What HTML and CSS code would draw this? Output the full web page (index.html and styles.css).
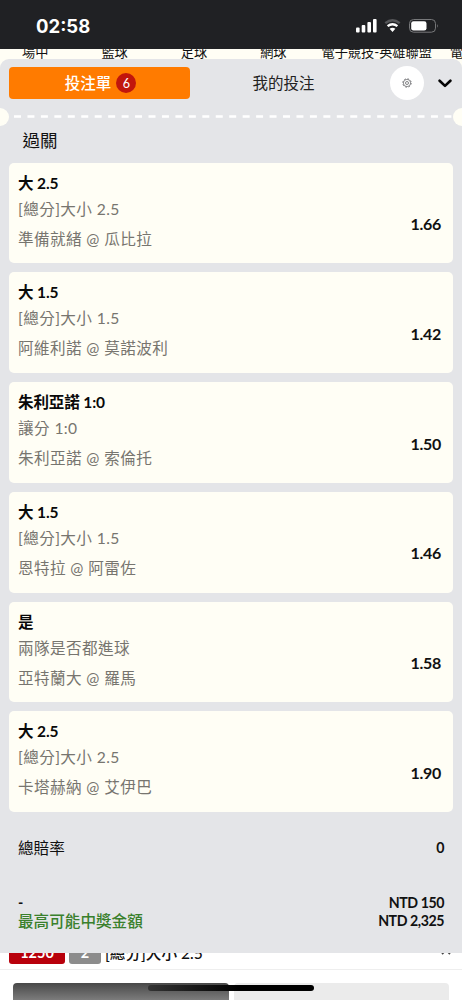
FILE: index.html
```html
<!DOCTYPE html>
<html lang="zh-Hant">
<head>
<meta charset="utf-8">
<meta name="viewport" content="width=device-width, initial-scale=1">
<title>投注單</title>
<link rel="stylesheet" href="styles.css">
</head>
<body>
<div class="screen">
  <header class="status">
    <span class="clock">02:58</span>
    <svg class="status-icons" width="86" height="18" viewBox="0 0 86 18">
      <g fill="#fff"><rect x="2" y="10.500" width="3.600" height="5" rx="1"/><rect x="7.700" y="8" width="3.600" height="7.500" rx="1"/><rect x="13.400" y="5" width="3.600" height="10.500" rx="1"/><rect x="19" y="2" width="3.600" height="13.500" rx="1"/></g>
      <path d="M31.300 6.200Q38.500 .2 45.700 6.200" fill="none" stroke="#56575a" stroke-width="2.400"/>
      <path d="M33.600 9.100Q38.500 5.200 43.400 9.100" fill="none" stroke="#fff" stroke-width="2.400"/>
      <path d="M35.600 11.800Q38.500 9.600 41.400 11.800L38.500 15Z" fill="#fff"/>
      <rect x="55.500" y="2.500" width="26" height="12.700" rx="4" fill="none" stroke="#77787a"/>
      <rect x="57.200" y="4.200" width="15.300" height="9.400" rx="2.300" fill="#fff"/>
      <path d="M83 7q1.700 1.900 0 3.800z" fill="#77787a"/>
    </svg>
  </header>
  <nav class="sports">
    <span>場中</span><span>籃球</span><span>足球</span><span>網球</span><span>電子競技-英雄聯盟</span><span>電子</span>
  </nav>
  <div class="sheet-back">
  <main class="sheet">
    <div class="tabs">
      <div class="tab active">投注單<span class="count">6</span></div>
      <div class="tab">我的投注</div>
      <div class="gear">
        <svg width="10" height="10" viewBox="0 0 10 10" fill="none" stroke="#66676a"><circle cx="5" cy="5" r="3.600" stroke-width=".7"/><circle cx="5" cy="5" r="4.200" stroke-width=".9" stroke-dasharray="1.650 1.650"/><circle cx="5" cy="5" r="1.500" stroke-width=".8"/></svg>
      </div>
      <svg class="chevron" width="14" height="9" viewBox="0 0 14 9" fill="none" stroke="#050505" stroke-width="2.600" stroke-linecap="round" stroke-linejoin="round"><path d="M1.600 1.700L7 6.900l5.400-5.200"/></svg>
    </div>
    <div class="perforation">
      <i class="notch"></i>
      <svg class="dashes" width="438" height="3"><path d="M0 1.500H438" stroke="#fff" stroke-width="2.600" stroke-dasharray="7 6.450"/></svg>
      <i class="notch right"></i>
    </div>
    <h1>過關</h1>
    <section class="bets">
      <article class="bet"><div><h2>大 2.5</h2><p>[總分]大小 2.5</p><p class="match">準備就緒 @ 瓜比拉</p></div><b class="odds">1.66</b></article>
      <article class="bet"><div><h2>大 1.5</h2><p>[總分]大小 1.5</p><p class="match">阿維利諾 @ 莫諾波利</p></div><b class="odds">1.42</b></article>
      <article class="bet"><div><h2>朱利亞諾 1:0</h2><p>讓分 1:0</p><p class="match">朱利亞諾 @ 索倫托</p></div><b class="odds">1.50</b></article>
      <article class="bet"><div><h2>大 1.5</h2><p>[總分]大小 1.5</p><p class="match">恩特拉 @ 阿雷佐</p></div><b class="odds">1.46</b></article>
      <article class="bet"><div><h2>是</h2><p>兩隊是否都進球</p><p class="match">亞特蘭大 @ 羅馬</p></div><b class="odds">1.58</b></article>
      <article class="bet"><div><h2>大 2.5</h2><p>[總分]大小 2.5</p><p class="match">卡塔赫納 @ 艾伊巴</p></div><b class="odds">1.90</b></article>
    </section>
    <section class="totals">
      <div class="row total-odds"><span>總賠率</span><b>0</b></div>
      <div class="row stake"><b>-</b><b>NTD 150</b></div>
      <div class="row win"><span>最高可能中獎金額</span><b>NTD 2,325</b></div>
    </section>
  </main>
  </div>
  <div class="underlay">
    <div class="market"><span class="tag red">1250</span><span class="tag gray">2</span><span class="market-name">[總分]大小 2.5</span>
      <svg class="up" width="10" height="6" viewBox="0 0 10 6" fill="none" stroke="#444" stroke-width="1.800"><path d="M1 5L5 1l4 4"/></svg>
    </div>
    <div class="tiles"><div class="tile dark"></div><div class="tile"></div></div>
    <div class="home-bar"></div>
  </div>
</div>
</body>
</html>
```
FILE: styles.css
```css
* { box-sizing: border-box; }
body, h1, h2, p { margin: 0; }
body {
  font-family: Lato, "Noto Sans CJK TC", sans-serif;
  color: #111;
  background: #fff;
}
.screen {
  position: relative;
  width: 462px;
  height: 1000px;
  overflow: hidden;
  display: flex;
  flex-direction: column;
}
.status {
  flex: 0 0 49px;
  background: #202124;
  display: flex;
  justify-content: space-between;
  align-items: center;
  padding: 2px 22px 0 36px;
}
.clock {
  font: 700 18.500px/20px Inter, sans-serif;
  color: #fff;
}
.sports {
  flex: 0 0 9.500px;
  overflow: hidden;
  background: #fffef5;
  display: flex;
  align-items: flex-end;
  gap: 53px;
  padding-left: 22px;
  font-size: 13.200px;
  line-height: 14px;
  white-space: nowrap;
}
.sports span:nth-child(5) { margin-left: -18px; }
.sports span:nth-child(6) { margin-left: -35px; }
.sheet-back { flex: 0 0 894.500px; background: #fffef5; }
.sheet {
  height: 100%;
  background: #e4e5e8;
  border-radius: 9px 9px 0 0;
  display: flex;
  flex-direction: column;
}
.tabs {
  height: 49px;
  display: flex;
  align-items: center;
  padding: 0 10px 0 9px;
}
.tab {
  width: 181px;
  height: 32px;
  display: flex;
  align-items: center;
  justify-content: center;
  font-size: 15.500px;
  color: #222;
  padding: 0 0 2px 6px;
}
.tab.active {
  color: #fff;
  font-weight: 500;
  background: #ff7b00;
  border-radius: 4px;
  padding: 0 0 2px 2px;
}
.count {
  width: 20px;
  height: 20px;
  margin: 2px 0 0 5px;
  border-radius: 50%;
  background: #c1160c;
  font-size: 12.500px;
  font-weight: 400;
  line-height: 21px;
  text-align: center;
}
.gear {
  width: 34px;
  height: 34px;
  margin-left: 19px;
  border-radius: 50%;
  background: #fff;
  display: flex;
  align-items: center;
  justify-content: center;
}
.chevron { margin: 1px 0 0 14px; }
.perforation {
  height: 18px;
  display: flex;
  align-items: center;
  justify-content: space-between;
}
.notch {
  width: 9px;
  height: 18px;
  background: #fffef5;
  border-radius: 0 9px 9px 0;
}
.notch.right { border-radius: 9px 0 0 9px; }
.dashes { margin-left: 4px; }
h1 {
  height: 37px;
  padding: 1px 0 0 22.500px;
  font-size: 17.500px;
  font-weight: 400;
  line-height: 28px;
}
.bets {
  display: flex;
  flex-direction: column;
  gap: 9px;
  padding: 0 9px;
}
.bet {
  height: 100.800px;
  display: flex;
  justify-content: space-between;
  background: #fffef5;
  border-radius: 5px;
  padding: 7px 12px 0 9px;
}
.bet h2 {
  color: #090909;
  font-size: 15.500px;
  font-weight: 700;
  letter-spacing: -.1px;
  line-height: 26px;
}
.bet p {
  color: #77756f;
  font-size: 15.600px;
  font-weight: 400;
  letter-spacing: .4px;
  line-height: 26px;
}
.bet .match { line-height: 34.500px; }
.odds {
  padding-top: 44.500px;
  font-size: 16px;
  letter-spacing: -.3px;
  line-height: 20px;
  color: #111;
}
.totals { padding: 23.500px 18px 0; }
.row {
  display: flex;
  justify-content: space-between;
  font-size: 15.600px;
  line-height: 24px;
}
.row b { font-size: 14.200px; letter-spacing: -.45px; }
.total-odds { height: 57px; }
.stake { height: 18px; line-height: 20px; }
.win { line-height: 19px; }
.win span {
  color: #39802c;
  font-weight: 500;
  line-height: 21px;
}
.underlay {
  position: relative;
  flex: 1;
  overflow: hidden;
  background: #fff;
}
.market {
  height: 17px;
  padding: 0 11px 5px 9px;
  border-bottom: 1px solid #eee;
  display: flex;
  align-items: flex-end;
  gap: 4px;
}
.tag {
  height: 22px;
  border-radius: 3px;
  color: #fff;
  font-size: 14.500px;
  font-weight: 700;
  line-height: 22px;
  text-align: center;
}
.tag.red { width: 56px; background: #b8000b; }
.tag.gray { width: 32px; background: #8c8c8c; }
.market-name {
  font-size: 15.600px;
  font-weight: 500;
  line-height: 22px;
}
.up { align-self: flex-start; margin: -4px 0 0 auto; flex: none; }
.tiles {
  display: flex;
  gap: 5px;
  padding: 13px 13px 0;
}
.tile {
  flex: 1;
  height: 30px;
  border-radius: 4px 4px 0 0;
  background: #ebebeb;
}
.tile.dark { background: linear-gradient(#484848, #858585 20px); }
.home-bar {
  position: absolute;
  left: 148px;
  top: 32px;
  width: 166px;
  height: 6px;
  border-radius: 3px;
  background: linear-gradient(90deg, #333, #000 55%);
}
```
